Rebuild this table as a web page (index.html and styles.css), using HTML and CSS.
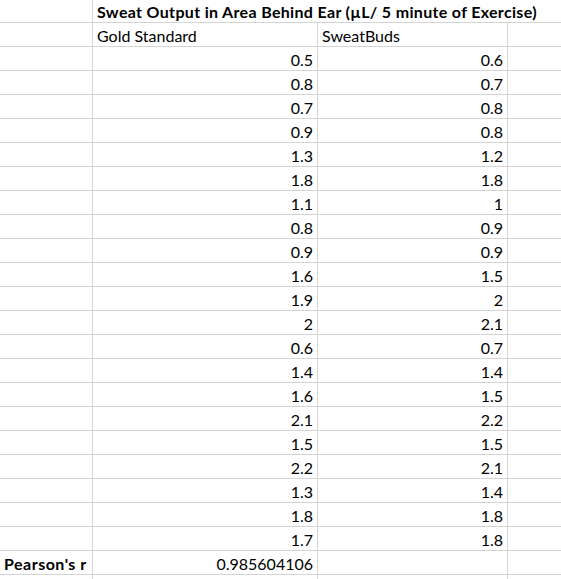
FILE: index.html
```html
<!DOCTYPE html>
<html>
<head>
<meta charset="utf-8">
<link rel="stylesheet" href="styles.css">
</head>
<body>
<div class="sheet">
  <div class="row title-row">
    <div class="cell a"></div>
    <div class="cell title">Sweat Output in Area Behind Ear (µL/ 5 minute of Exercise)</div>
  </div>
  <div class="row">
    <div class="cell a"></div>
    <div class="cell b">Gold Standard</div>
    <div class="cell c">SweatBuds</div>
    <div class="cell d"></div>
  </div>
  <div class="row"><div class="cell a"></div><div class="cell b num">0.5</div><div class="cell c num">0.6</div><div class="cell d"></div></div>
  <div class="row"><div class="cell a"></div><div class="cell b num">0.8</div><div class="cell c num">0.7</div><div class="cell d"></div></div>
  <div class="row"><div class="cell a"></div><div class="cell b num">0.7</div><div class="cell c num">0.8</div><div class="cell d"></div></div>
  <div class="row"><div class="cell a"></div><div class="cell b num">0.9</div><div class="cell c num">0.8</div><div class="cell d"></div></div>
  <div class="row"><div class="cell a"></div><div class="cell b num">1.3</div><div class="cell c num">1.2</div><div class="cell d"></div></div>
  <div class="row"><div class="cell a"></div><div class="cell b num">1.8</div><div class="cell c num">1.8</div><div class="cell d"></div></div>
  <div class="row"><div class="cell a"></div><div class="cell b num">1.1</div><div class="cell c num">1</div><div class="cell d"></div></div>
  <div class="row"><div class="cell a"></div><div class="cell b num">0.8</div><div class="cell c num">0.9</div><div class="cell d"></div></div>
  <div class="row"><div class="cell a"></div><div class="cell b num">0.9</div><div class="cell c num">0.9</div><div class="cell d"></div></div>
  <div class="row"><div class="cell a"></div><div class="cell b num">1.6</div><div class="cell c num">1.5</div><div class="cell d"></div></div>
  <div class="row"><div class="cell a"></div><div class="cell b num">1.9</div><div class="cell c num">2</div><div class="cell d"></div></div>
  <div class="row"><div class="cell a"></div><div class="cell b num">2</div><div class="cell c num">2.1</div><div class="cell d"></div></div>
  <div class="row"><div class="cell a"></div><div class="cell b num">0.6</div><div class="cell c num">0.7</div><div class="cell d"></div></div>
  <div class="row"><div class="cell a"></div><div class="cell b num">1.4</div><div class="cell c num">1.4</div><div class="cell d"></div></div>
  <div class="row"><div class="cell a"></div><div class="cell b num">1.6</div><div class="cell c num">1.5</div><div class="cell d"></div></div>
  <div class="row"><div class="cell a"></div><div class="cell b num">2.1</div><div class="cell c num">2.2</div><div class="cell d"></div></div>
  <div class="row"><div class="cell a"></div><div class="cell b num">1.5</div><div class="cell c num">1.5</div><div class="cell d"></div></div>
  <div class="row"><div class="cell a"></div><div class="cell b num">2.2</div><div class="cell c num">2.1</div><div class="cell d"></div></div>
  <div class="row"><div class="cell a"></div><div class="cell b num">1.3</div><div class="cell c num">1.4</div><div class="cell d"></div></div>
  <div class="row"><div class="cell a"></div><div class="cell b num">1.8</div><div class="cell c num">1.8</div><div class="cell d"></div></div>
  <div class="row"><div class="cell a"></div><div class="cell b num">1.7</div><div class="cell c num">1.8</div><div class="cell d"></div></div>
  <div class="row"><div class="cell a bold">Pearson's r</div><div class="cell b num">0.985604106</div><div class="cell c"></div><div class="cell d"></div></div>
  <div class="row"><div class="cell a"></div><div class="cell b"></div><div class="cell c"></div><div class="cell d"></div></div>
</div>
</body>
</html>
```

FILE: styles.css
```css
html, body {
  margin: 0;
  padding: 0;
  background: #ffffff;
  overflow: hidden;
}

.sheet {
  font-family: Lato, "Open Sans", "Noto Sans", sans-serif;
  font-size: 16px;
  color: #000000;
  width: 561px;
  margin-top: -1px;
}

.row {
  display: grid;
  grid-template-columns: 93px 225px 190px 53px;
  height: 24px;
}

.title-row {
  grid-template-columns: 93px 468px;
}

.cell {
  box-sizing: border-box;
  height: 24px;
  border-bottom: 1px solid #d4d4d4;
  border-right: 1px solid #d4d4d4;
  padding: 0 4px 0 4px;
  line-height: 25px;
  white-space: nowrap;
  overflow: visible;
}

.title {
  border-right: none;
  font-weight: bold;
  letter-spacing: 0.33px;
}

.d {
  border-right: none;
}

.num {
  text-align: right;
}

.bold {
  font-weight: bold;
  letter-spacing: 0.5px;
}
```
